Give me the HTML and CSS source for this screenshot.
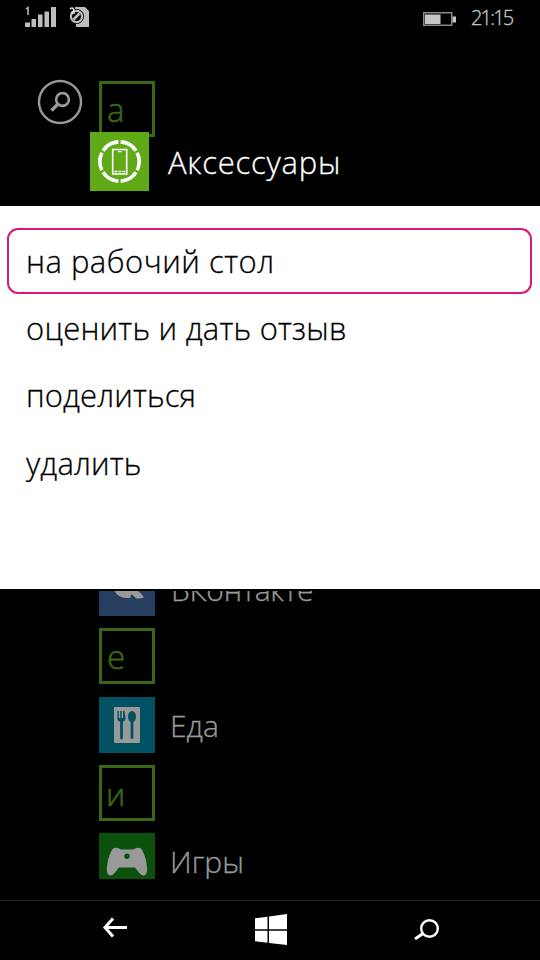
FILE: index.html
```html
<!DOCTYPE html>
<html lang="ru">
<head>
<meta charset="utf-8">
<title>Приложения</title>
<link rel="stylesheet" href="styles.css">
</head>
<body>
<div class="phone">
  <header class="status">
    <svg class="signal" width="32" height="22" viewBox="0 0 32 22"><path fill="#bdbdbd" d="M0 17.500h5V22H0zM6.500 14h4.500v8H6.500zM13 9.500h4.500V22H13zM19.500 6.500H24V22h-4.500zM26 2h5v20h-5z"/><path d="M1 4l2-1.500V10" fill="none" stroke="#bdbdbd" stroke-width="1.500"/></svg>
    <svg class="sim" width="22" height="22" viewBox="0 0 22 22"><path d="M6 2h10l4 4v16H7z" fill="#bdbdbd"/><circle cx="7.500" cy="11.500" r="7.500" fill="#000"/><circle cx="7.500" cy="11.500" r="5.600" fill="none" stroke="#bdbdbd" stroke-width="2.200"/><path d="M4.500 14.500l6-6" stroke="#bdbdbd" stroke-width="2.600"/><path d="M1 4q2-2 3.500 0T2 8h4" fill="none" stroke="#ddd" stroke-width="1.500"/></svg>
    <svg class="battery" width="34" height="15" viewBox="0 0 34 15"><path d="M.75.75h28v12.500h-28z" fill="none" stroke="#888" stroke-width="1.500"/><path d="M2 2.500h15.500v9.500H2zM29.500 4.500H33v6h-3.500z" fill="#c6c6c6"/></svg>
    <span class="time">21:15</span>
  </header>
  <section class="top">
    <svg class="search" width="46" height="46" viewBox="0 0 46 46" fill="none" stroke="#999"><circle cx="23" cy="23" r="21" stroke-width="2.400"/><circle cx="25.500" cy="20.500" r="6.400" stroke-width="2.600"/><path d="M21 25l-6.500 6.500" stroke-width="3.500"/></svg>
    <span class="letter">а</span>
  </section>
  <section class="selected">
    <svg class="big-tile" width="59" height="59" viewBox="0 0 59 59" fill="none" stroke="#fff"><circle class="ring" cx="29.500" cy="29.500" r="19.700" stroke-width="3.600" pathLength="360" transform="rotate(-90 29.500 29.500)"/><path d="M22.700 17.500h14v24.500h-14z" stroke-width="1.600"/><path d="M28 19.700h3.500M24.500 39.500h2.700M28.400 39.500h2.700M32.300 39.500H35" stroke-width="1.300"/></svg>
    <span class="selected-name">Аксессуары</span>
  </section>
  <ul class="menu">
    <li class="item marked"><span class="m1">на рабочий стол</span></li>
    <li class="item"><span class="m2">оценить и дать отзыв</span></li>
    <li class="item"><span class="m3">поделиться</span></li>
    <li class="item"><span class="m4">удалить</span></li>
  </ul>
  <main class="apps">
    <div class="row vk">
      <svg width="56" height="56" viewBox="0 0 56 56"><path fill="#263e60" d="M0 0h56v56H0z"/><path fill="#999" d="M10 20h7q3 9 8 10V20h7v9q5-2 8-9h6q-2 7-7 11q4 3 6 6.500q-4 1.500-8 .8l-4.500-4.300l-1.500 4h-4Q19 38 15 30z"/></svg>
      <span class="name n1">ВКонтакте</span>
    </div>
    <div class="row"><span class="letter">е</span></div>
    <div class="row">
      <svg width="56" height="56" viewBox="0 0 56 56"><path fill="#005263" d="M0 0h56v56H0z"/><rect x="15" y="10" width="26" height="36" rx="1" fill="#999"/><path fill="#005263" d="M18.500 14h1.300v7h1.400v-7h1.500v7h1.400v-7h1.300l1.200 7q0 3-2.700 3.700V41a1.400 1.400 0 0 1-2.800 0V24.700Q18.300 24 18.300 21z"/><ellipse cx="33" cy="19.700" rx="4" ry="5.800" fill="#005263"/><path d="M33 23v17.500" stroke="#005263" stroke-width="2.800" stroke-linecap="round"/></svg>
      <span class="name n2">Еда</span>
    </div>
    <div class="row"><span class="letter small">и</span></div>
    <div class="row">
      <svg width="56" height="56" viewBox="0 0 56 56"><path fill="#0b500b" d="M0 0h56v56H0z"/><path fill="#999" d="M14 15.500q3-1.500 6 0l2 1h12l2-1q3-1.500 6 0c3 3 7 16 6 23-1 5-5 5-8 1l-4-5H20l-4 5c-3 4-7 4-8-1-1-7 3-20 6-23z"/><circle cx="28" cy="23.200" r="2.700" fill="#0b500b"/></svg>
      <span class="name n3">Игры</span>
    </div>
  </main>
  <nav class="nav">
    <svg class="back" width="26" height="22" viewBox="0 0 26 22" fill="none" stroke="#fff" stroke-width="3"><path d="M25 10.500H3"/><path d="M11 1.500L3 10.500l8 9"/></svg>
    <svg width="32" height="32" viewBox="0 0 32 32" fill="#fff"><path d="M0 4.300l12.500-1.600V15.200H0zM14 2.500L32 0v15.200H14zM0 16.700h12.500v12L0 27.200zM14 16.700h18V31l-18-2.100z"/></svg>
    <svg width="26" height="22" viewBox="0 0 26 22" fill="none" stroke="#fff"><circle cx="16.500" cy="9.500" r="8.300" stroke-width="2.400"/><path d="M10 14.500l-8 5.500" stroke-width="3"/></svg>
  </nav>
</div>
</body>
</html>
```
FILE: styles.css
```css
* { box-sizing: border-box; }
body { margin: 0; background: #000; }
svg { display: block; flex: none; }
.phone {
  width: 540px; height: 960px; overflow: hidden;
  display: flex; flex-direction: column;
  background: #000; color: #fff;
  font-family: "Open Sans", "Noto Sans", sans-serif; font-weight: 300;
  -webkit-text-stroke: 0.3px currentColor;
}
.status { height: 81px; display: flex; align-items: flex-start; padding: 5px 26px 0 25px; flex: none; }
.sim { margin-left: 12px; }
.battery { margin: 7px 14px 0 auto; }
.time { width: 43px; font-size: 20px; line-height: 25px; color: #c4c4c4; white-space: nowrap; letter-spacing: -1.8px; }
.top { height: 51px; display: flex; padding-left: 37px; gap: 16px; align-items: flex-start; flex: none; }
.search { margin-top: -2px; }
.letter {
  width: 56px; height: 56px; border: 3px solid #3a6714;
  flex: none; padding-left: 5px; color: #3a6714;
  font-size: 33px; line-height: 52px;
  -webkit-text-stroke-width: 0.6px;
}
.small { font-size: 32px; padding-left: 4px; }
.selected { height: 74px; display: flex; padding-left: 90px; gap: 19px; position: relative; flex: none; }
.big-tile { background: #60a917; }
.ring { stroke-dasharray: 53 7; stroke-dashoffset: -3.5; }
.selected-name { font-size: 31px; line-height: 60px; white-space: nowrap; letter-spacing: 0.75px; }
.menu { height: 383px; margin: 0; padding: 22px 8px 0 7px; list-style: none; background: #fff; color: #000; flex: none; }
.item {
  height: 66px; margin-bottom: 1.2px; border: 2px solid transparent;
  padding-left: 17px; font-size: 31px; line-height: 62px; white-space: nowrap;
}
.m1 { letter-spacing: 0.5px; }
.m2 { letter-spacing: 0.22px; }
.m3, .m4 { letter-spacing: 0.12px; }
.marked { border-color: #d91a72; border-radius: 11px; }
.apps { height: 288px; margin: 2px 0; overflow: hidden; padding-left: 99px; flex: none; }
.row { display: flex; gap: 16px; height: 56px; margin-bottom: 12.3px; }
.vk { margin-top: -31px; }
.name { font-size: 30px; line-height: 57px; color: #999; white-space: nowrap; }
.n1 { line-height: 60px; letter-spacing: -0.3px; }
.n2, .n3 { margin-left: -1px; }
.nav {
  height: 60px; margin-top: 19px; border-top: 1px solid #242424; flex: none;
  display: flex; justify-content: space-between; align-items: center; padding: 0 101px 2px 102px;
}
.back { margin-top: -3px; }
```
